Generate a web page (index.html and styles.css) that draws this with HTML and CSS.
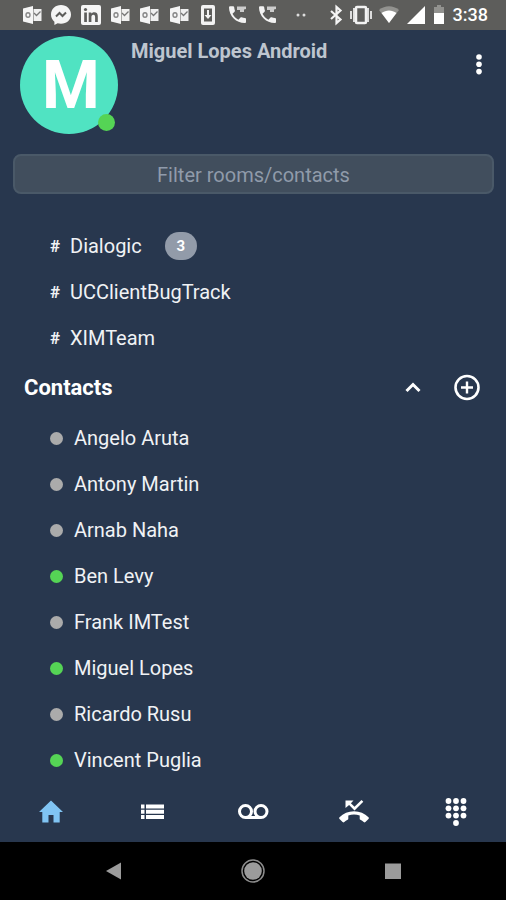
FILE: index.html
```
<!DOCTYPE html>
<html lang="en">
<head>
    <meta charset="UTF-8">
    <meta name="viewport" content="width=device-width, initial-scale=1.0">
    <title>Contacts</title>
    <link rel="stylesheet" href="styles.css">
</head>
<body>
    <!-- Shared icons -->
    <svg class="icon-defs" width="0" height="0">
        <symbol id="outlook" viewBox="0 0 22 22">
            <path fill="#f5f5f5" d="M2 4.500 12 2v18L2 17.500z"/>
            <path fill="#f0f0f0" d="M12.500 5H20.500v12h-8z"/>
            <path fill="none" stroke="#777" stroke-width="1.300" d="M13 9l2.500 2.500 4-4"/>
            <ellipse cx="7" cy="11" rx="2" ry="2.300" fill="none" stroke="#888" stroke-width="1.400"/>
        </symbol>
        <symbol id="call" viewBox="0 0 22 22">
            <path fill="#f2f2f2" d="M3 3.500c0-.8.6-1.300 1.300-1.300h2.800c.6 0 1 .4 1.100 1 .1 1.200.3 2.300.7 3.400.1.400 0 .8-.3 1.100L6.500 9.800c1.300 2.600 3.300 4.600 5.900 5.900l2.100-2.100c.3-.3.700-.4 1.100-.3 1.100.4 2.200.6 3.400.7.6.1 1 .5 1 1.100v2.800c0 .7-.6 1.200-1.300 1.200C10.300 19.100 3 12 3 3.500z"/>
            <path fill="#ccc" d="M11 2.500h9V5l-2 .5V8h-4V6h-3z"/>
        </symbol>
    </svg>

    <div class="status-bar">
        <div class="notifications">
            <svg width="22" height="22"><use href="#outlook"/></svg>
            <svg width="22" height="22" viewBox="0 0 22 22">
                <path fill="#f5f5f5" d="M11 1C5.300 1 1 5.100 1 10.500c0 3 1.300 5.500 3.400 7.200V21l3.200-1.700c1 .3 2.200.5 3.400.5 5.700 0 10-4 10-9.300S16.700 1 11 1z"/>
                <path fill="none" stroke="#5d5d5b" stroke-width="2" d="M6 12.500l3.500-3.500 3 3 3.500-3.500"/>
            </svg>
            <svg width="22" height="22" viewBox="0 0 22 22">
                <rect x="1" y="1" width="20" height="20" rx="2" fill="#f5f5f5"/>
                <circle cx="5.500" cy="5.500" r="1.600" fill="#5d5d5b"/>
                <path fill="#5d5d5b" d="M4.200 8.500h2.700V18H4.200zM8.700 8.500h2.600v1.300c.6-1 1.600-1.500 2.900-1.500 2.600 0 3.600 1.500 3.600 4.200V18h-2.700v-4.900c0-1.500-.4-2.400-1.700-2.400-1.400 0-2 1-2 2.400V18H8.700z"/>
            </svg>
            <svg width="22" height="22"><use href="#outlook"/></svg>
            <svg width="22" height="22"><use href="#outlook"/></svg>
            <svg width="22" height="22"><use href="#outlook"/></svg>
            <svg width="22" height="22" viewBox="0 0 22 22">
                <rect x="4" y="1" width="14" height="20" rx="2" fill="#f2f2f2"/>
                <path fill="#5d5d5b" d="M7 4.500h8v13H7z"/>
                <path fill="#f2f2f2" d="M10 6h2v5h2.500L11 15l-3.500-4H10z"/>
            </svg>
            <svg width="22" height="22"><use href="#call"/></svg>
            <svg width="22" height="22"><use href="#call"/></svg>
        </div>
        <svg class="more-dots" width="12" height="22" viewBox="0 0 12 22">
            <circle cx="3" cy="11" r="1.500" fill="#ddd"/>
            <circle cx="9" cy="11" r="1.500" fill="#ddd"/>
        </svg>
        <div class="system">
            <svg width="18" height="22" viewBox="0 0 18 22">
                <path fill="none" stroke="#f5f5f5" stroke-width="2.200" d="M4 7l9.500 8.500L9.500 19V3l4 3.500L4 15"/>
            </svg>
            <svg width="24" height="22" viewBox="0 0 24 22">
                <path fill="#ddd" d="M1 7h2v8H1zM21 7h2v8h-2zM4 4h3v14H4zM17 4h3v14h-3z"/>
                <rect x="7" y="3" width="10" height="16" rx="1" fill="#5d5d5b" stroke="#f2f2f2" stroke-width="2.500"/>
            </svg>
            <svg width="24" height="22" viewBox="0 0 24 22">
                <path fill="#92928f" d="M2 6c6-5 14-5 20 0L12 19z"/>
                <path fill="#fff" d="M4.500 9c4.500-3.500 10.500-3.500 15 0L12 19z"/>
            </svg>
            <svg width="22" height="22" viewBox="0 0 22 22">
                <path fill="#fff" d="M20 2v18H2z"/>
            </svg>
            <svg width="16" height="22" viewBox="0 0 16 22">
                <path fill="#92928f" d="M6 1h4v2h3v7H3V3h3z"/>
                <path fill="#fff" d="M3 9h10v11H3z"/>
            </svg>
            <span class="clock">3:38</span>
        </div>
    </div>

    <header class="profile">
        <div class="avatar">M<span class="presence online"></span></div>
        <h1>Miguel Lopes Android</h1>
        <button class="menu-button" aria-label="Menu">
            <svg width="8" height="24" viewBox="0 0 8 24" fill="#fff">
                <circle cx="4" cy="5" r="2.800"/>
                <circle cx="4" cy="12.300" r="2.800"/>
                <circle cx="4" cy="19.600" r="2.800"/>
            </svg>
        </button>
    </header>

    <div class="search">
        <input type="text" placeholder="Filter rooms/contacts" aria-label="Filter rooms/contacts">
    </div>

    <main>
        <ul class="rooms">
            <li><span class="hash">#</span>Dialogic<span class="badge">3</span></li>
            <li><span class="hash">#</span>UCClientBugTrack</li>
            <li><span class="hash">#</span>XIMTeam</li>
        </ul>

        <div class="section-header">
            <h2>Contacts</h2>
            <button aria-label="Collapse contacts">
                <svg width="28" height="28" viewBox="0 0 28 28" fill="none" stroke="#fff" stroke-width="3">
                    <path d="M7.500 17l6.500-6.500 6.500 6.500"/>
                </svg>
            </button>
            <button aria-label="Add contact">
                <svg width="28" height="28" viewBox="0 0 28 28" fill="none" stroke="#fff">
                    <circle cx="14" cy="13.500" r="11.500" stroke-width="2.600"/>
                    <path stroke-width="2.400" d="M14 7.500v12M8 13.500h12"/>
                </svg>
            </button>
        </div>

        <ul class="contacts">
            <li><span class="presence"></span>Angelo Aruta</li>
            <li><span class="presence"></span>Antony Martin</li>
            <li><span class="presence"></span>Arnab Naha</li>
            <li><span class="presence online"></span>Ben Levy</li>
            <li><span class="presence"></span>Frank IMTest</li>
            <li><span class="presence online"></span>Miguel Lopes</li>
            <li><span class="presence"></span>Ricardo Rusu</li>
            <li><span class="presence online"></span>Vincent Puglia</li>
        </ul>
    </main>

    <nav class="tabs">
        <button aria-label="Home">
            <svg width="32" height="32" viewBox="0 0 32 32">
                <path fill="#80c4f3" d="M16 4.500 28 16h-3.300v10.500H18.500V19h-5v7.500H7.300V16H4z"/>
            </svg>
        </button>
        <button aria-label="List">
            <svg width="32" height="32" viewBox="0 0 32 32" fill="#fff">
                <path d="M5 8.500h3.500v4H5zM5 13.700h3.500v4H5zM5 18.900h3.500v4H5zM10 8.500h18v4H10zM10 13.700h18v4H10zM10 18.900h18v4H10z"/>
            </svg>
        </button>
        <button aria-label="Voicemail">
            <svg width="32" height="32" viewBox="0 0 32 32" fill="none" stroke="#fff" stroke-width="3">
                <circle cx="8.500" cy="15.500" r="6"/>
                <circle cx="24" cy="15.500" r="6"/>
                <path d="M8.500 21.500H24"/>
            </svg>
        </button>
        <button aria-label="Missed calls">
            <svg width="32" height="32" viewBox="0 0 32 32">
                <path fill="#fff" d="M7.500 4.500h8l-2.600 2.700 3.600 3.500 7-6.700 1.800 1.800-8.800 8.700-5.400-5.500L7.500 12z"/>
                <path fill="#fff" d="M30.500 21.200C26.700 17.500 21.600 15.300 16 15.300S5.300 17.500 1.500 21.200c-.5.500-.5 1.200 0 1.700l3.100 3.100c.5.500 1.200.5 1.700 0 1-.9 2.100-1.600 3.300-2.200.4-.2.700-.6.700-1.100v-3.300c1.800-.6 3.700-.8 5.700-.8s3.900.2 5.700.8v3.300c0 .5.300.9.700 1.100 1.200.6 2.300 1.300 3.300 2.200.5.500 1.200.5 1.700 0l3.100-3.100c.5-.5.5-1.200 0-1.700z"/>
            </svg>
        </button>
        <button aria-label="Dial pad">
            <svg width="32" height="32" viewBox="0 0 32 32" fill="#fff">
                <circle cx="9.500" cy="5" r="2.900"/><circle cx="17" cy="5" r="2.900"/><circle cx="24.500" cy="5" r="2.900"/>
                <circle cx="9.500" cy="12.300" r="2.900"/><circle cx="17" cy="12.300" r="2.900"/><circle cx="24.500" cy="12.300" r="2.900"/>
                <circle cx="9.500" cy="19.600" r="2.900"/><circle cx="17" cy="19.600" r="2.900"/><circle cx="24.500" cy="19.600" r="2.900"/>
                <circle cx="17" cy="27" r="2.900"/>
            </svg>
        </button>
    </nav>

    <div class="system-nav">
        <button aria-label="Back">
            <svg width="26" height="26" viewBox="0 0 26 26"><path fill="#9b9b9b" d="M6 13 21 4.500v17z"/></svg>
        </button>
        <button aria-label="Home screen">
            <svg width="26" height="26" viewBox="0 0 26 26">
                <circle cx="13" cy="13" r="11" fill="none" stroke="#8c8c8c" stroke-width="1.500"/>
                <circle cx="13" cy="13" r="8.800" fill="#9b9b9b"/>
            </svg>
        </button>
        <button aria-label="Recent apps">
            <svg width="26" height="26" viewBox="0 0 26 26"><path fill="#9b9b9b" d="M5 5.500h16v15.500H5z"/></svg>
        </button>
    </div>
</body>
</html>
```

FILE: styles.css
```
* {
    box-sizing: border-box;
}
body {
    margin: 0;
    min-height: 100vh;
    display: flex;
    flex-direction: column;
    font-family: Roboto, sans-serif;
    font-size: 20px;
    line-height: 24px;
    background-color: #28374e;
    color: #f0f2f5;
}
svg {
    display: block;
}
.icon-defs {
    position: absolute;
}
button {
    display: flex;
    align-items: center;
    justify-content: center;
    padding: 0;
    border: none;
    background: none;
    cursor: pointer;
}
ul {
    margin: 0;
    padding: 0;
    list-style: none;
}
h1, h2 {
    margin: 0;
}

/* Android status bar */
.status-bar {
    display: flex;
    align-items: center;
    height: 30px;
    padding: 0 18px 0 21px;
    background-color: #5d5d5b;
}
.notifications {
    display: flex;
    justify-content: space-between;
    width: 55%;
}
.more-dots {
    margin-left: 17px;
}
.system {
    display: flex;
    align-items: center;
    gap: 4px;
    margin-left: auto;
}
.clock {
    margin-left: 2px;
    font-size: 18px;
    font-weight: 500;
    color: #fff;
}

/* Profile */
.profile {
    display: flex;
    align-items: flex-start;
    padding: 6px 12px 0 20px;
}
.avatar {
    position: relative;
    width: 98px;
    height: 98px;
    padding-left: 4px;
    border-radius: 50%;
    background-color: #50e3c2;
    color: #fff;
    font-size: 66px;
    font-weight: bold;
    line-height: 100px;
    text-align: center;
}
.avatar .presence {
    position: absolute;
    right: 3px;
    bottom: 3px;
    width: 17px;
    height: 17px;
}
.profile h1 {
    flex: 1;
    margin: 3px 0 0 13px;
    font-size: 20px;
    font-weight: bold;
    color: #bec5cf;
}
.menu-button {
    width: 30px;
    height: 56px;
}

/* Filter box */
.search {
    padding: 20px 12px 0 13px;
}
.search input {
    display: block;
    width: 100%;
    height: 40px;
    padding: 2px 2px 0;
    border: 2px solid #4a5968;
    border-radius: 8px;
    background-color: #414e5d;
    color: #f0f2f5;
    font: inherit;
    text-align: center;
}
.search input::placeholder {
    color: #909baa;
    opacity: 1;
}

/* Rooms and contacts */
main {
    flex: 1;
    padding-top: 28px;
}
.rooms li, .contacts li {
    display: flex;
    align-items: center;
    height: 46px;
    padding: 2px 0 0 50px;
}
.hash {
    width: 20px;
    font-size: 17px;
    font-weight: bold;
}
.badge {
    width: 32px;
    height: 28px;
    margin-left: 23px;
    border-radius: 14px;
    background-color: #929ba9;
    color: #fff;
    font-size: 15px;
    font-weight: bold;
    line-height: 28px;
    text-align: center;
}
.section-header {
    display: flex;
    align-items: center;
    gap: 26px;
    height: 54px;
    padding: 2px 25px 0 24px;
}
.section-header h2 {
    flex: 1;
    font-size: 22px;
    font-weight: bold;
    color: #fff;
}
.presence {
    width: 13px;
    height: 13px;
    border-radius: 50%;
    background-color: #ababab;
}
.contacts .presence {
    margin-right: 11px;
}
.presence.online {
    background-color: #55d455;
}

/* Bottom bars */
.tabs {
    display: grid;
    grid-template-columns: repeat(5, 1fr);
    height: 60px;
}
.system-nav {
    display: grid;
    grid-template-columns: repeat(3, 1fr);
    height: 58px;
    padding: 0 43px;
    background-color: #000;
}
```
